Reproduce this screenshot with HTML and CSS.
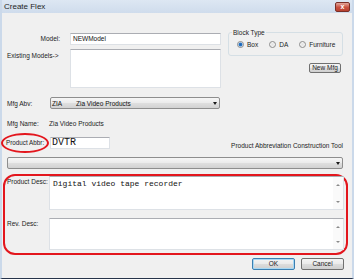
FILE: index.html
```html
<!DOCTYPE html>
<html lang="en">
<head>
  <meta charset="UTF-8">
  <title>Create Flex</title>
  <link rel="stylesheet" href="styles.css">
</head>
<body>
  <div class="window">
    <div class="titlebar">
      <span class="title">Create Flex</span>
      <span class="close-btn">x</span>
    </div>

    <div class="content">
      <!-- model name + block type -->
      <div class="top">
        <div class="models">
          <span class="lbl lbl-model">Model:</span>
          <div class="field model-field">NEWModel</div>
          <span class="lbl lbl-existing">Existing Models-&gt;</span>
          <div class="field list-field"></div>
        </div>
        <div class="side">
          <fieldset class="group">
            <legend>Block Type</legend>
            <div class="radios">
              <span class="radio"><span class="dot checked"></span>Box</span>
              <span class="radio"><span class="dot"></span>DA</span>
              <span class="radio"><span class="dot"></span>Furniture</span>
            </div>
          </fieldset>
          <div class="btn new-mfg">New Mfg</div>
        </div>
      </div>

      <div class="line mfg-row">
        <span class="lbl col-43">Mfg Abv:</span>
        <div class="combo mfg-combo"><span class="abv">ZIA</span>Zia Video Products<span class="arrow"></span></div>
      </div>

      <div class="line name-row">
        <span class="lbl col-42">Mfg Name:</span>
        <span class="lbl">Zia Video Products</span>
      </div>

      <div class="line abbr-row">
        <span class="lbl circled">Product Abbr:</span>
        <div class="field abbr-field">DVTR</div>
        <span class="lbl tool-lbl">Product Abbreviation Construction Tool</span>
      </div>

      <div class="combo wide-combo"><span class="arrow"></span></div>

      <!-- description boxes, marked in red -->
      <div class="highlight">
        <div class="desc-row">
          <span class="lbl col-42 desc-lbl">Product Desc:</span>
          <div class="memo memo-desc">
            <div class="memo-text">Digital video tape recorder</div>
            <div class="scroll"><span class="up"></span><span class="down"></span></div>
          </div>
        </div>
        <div class="desc-row rev-row">
          <span class="lbl col-42 desc-lbl">Rev. Desc:</span>
          <div class="memo memo-rev">
            <div class="memo-text"></div>
            <div class="scroll"><span class="up"></span><span class="down"></span></div>
          </div>
        </div>
      </div>

      <div class="buttons">
        <div class="btn ok-btn">OK</div>
        <div class="btn cancel-btn">Cancel</div>
      </div>
    </div>
  </div>
</body>
</html>
```

FILE: styles.css
```css
body {
  margin: 0;
  background-color: #f0f0f0;
  font-family: "Liberation Sans", Arial, sans-serif;
}

.window {
  width: 354px;
  height: 279px;
  box-sizing: border-box;
  background-color: #f0f0f0;
  border-left: 2px solid #cbd9ea;
  border-right: 2px solid #cbd9ea;
  border-bottom: 1px solid #26334a;
  display: flex;
  flex-direction: column;
}

.titlebar {
  height: 13px;
  display: flex;
  align-items: center;
  background: linear-gradient(#dde7f3, #cfdcec);
}
.title {
  padding-left: 2px;
  font-size: 8px;
  color: #1e1e1e;
}
.close-btn {
  margin-left: auto;
  margin-right: 2px;
  width: 15px;
  height: 10px;
  box-sizing: border-box;
  border: 1px solid #7a2f27;
  border-radius: 2px;
  background: linear-gradient(#e3a79c, #c9503f 55%, #b8412f);
  color: #fff;
  font-size: 7px;
  font-weight: bold;
  line-height: 7px;
  text-align: center;
}

.content {
  flex: 1;
  padding: 0 8px 0 5px;
}

.lbl {
  font-size: 6.5px;
  line-height: 7px;
  color: #1c1c1c;
  white-space: nowrap;
}

.field {
  box-sizing: border-box;
  background-color: #fff;
  border: 1px solid #dde1e6;
  border-top-color: #abadb3;
  font-size: 6.5px;
  line-height: 10px;
  color: #111;
}

/* top block */
.top {
  display: flex;
  align-items: flex-start;
  margin-top: 16px;
}
.models {
  width: 214px;
  padding-top: 4px;
  display: grid;
  grid-template-columns: 63px 151px;
  row-gap: 4px;
}
.lbl-model {
  text-align: right;
  padding-right: 10px;
  line-height: 12px;
}
.lbl-existing {
  padding-top: 3px;
}
.model-field {
  height: 12px;
  padding: 0 2px;
}
.list-field {
  height: 39px;
}

.side {
  width: 115px;
  margin-left: 7px;
  display: flex;
  flex-direction: column;
}
.group {
  margin: 0;
  min-width: 0;
  padding: 4px 0 7px 8px;
  border: 1px solid #d5dfe5;
  border-radius: 3px;
}
.group legend {
  padding: 0 1px;
  margin-left: -5px;
  font-size: 6.5px;
  line-height: 7px;
  color: #1c1c1c;
}
.radios {
  display: flex;
  align-items: center;
  height: 8px;
}
.radio {
  display: flex;
  align-items: center;
  margin-right: 11px;
  font-size: 6.5px;
  color: #1c1c1c;
}
.dot {
  width: 7px;
  height: 7px;
  box-sizing: border-box;
  border: 1px solid #8d8d8d;
  border-radius: 50%;
  margin-right: 3px;
  background: radial-gradient(circle, #e2e2e2 0, #f7f7f7 3px);
}
.dot.checked {
  background: radial-gradient(circle, #1f63b0 0, #2c78c8 1.6px, #dfe8f2 2.3px);
}

.btn {
  box-sizing: border-box;
  border: 1px solid #707070;
  border-radius: 2px;
  background: linear-gradient(#f4f4f4, #ebebeb 45%, #dddddd 50%, #cfcfcf);
  text-align: center;
  font-size: 6.5px;
  color: #1c1c1c;
}
.new-mfg {
  align-self: flex-end;
  margin-top: 7px;
  margin-right: 2px;
  width: 32px;
  height: 10px;
  line-height: 8px;
}

/* manufacturer rows */
.line {
  display: flex;
  align-items: center;
  height: 12px;
}
.col-43 {
  width: 43px;
}
.col-42 {
  width: 42px;
}
.mfg-row {
  margin-top: 9px;
}
.combo {
  box-sizing: border-box;
  height: 12px;
  display: flex;
  align-items: center;
  border: 1px solid #8e8e8e;
  border-radius: 2px;
  background: linear-gradient(#f6f6f6, #ececec 45%, #dedede 55%, #d2d2d2);
  font-size: 6.5px;
  color: #111;
  padding-left: 1px;
}
.mfg-combo {
  width: 170px;
}
.abv {
  width: 24px;
}
.arrow {
  margin-left: auto;
  margin-right: 2px;
  width: 0;
  height: 0;
  border-left: 2.5px solid transparent;
  border-right: 2.5px solid transparent;
  border-top: 3px solid #1a1a1a;
}
.name-row {
  margin-top: 8px;
}
.abbr-row {
  margin-top: 8px;
}
.circled {
  box-sizing: border-box;
  width: 48px;
  height: 20px;
  margin: -4px 1px -4px -6px;
  padding-left: 3px;
  border: 2px solid #e3161d;
  border-radius: 50%;
  line-height: 16px;
  font-size: 6.3px;
}
.abbr-field {
  width: 60px;
  height: 12px;
  padding: 0 1px;
  font-family: "Liberation Mono", "Courier New", monospace;
  font-size: 10px;
}
.tool-lbl {
  margin-left: auto;
  margin-right: 1px;
  align-self: flex-end;
}
.wide-combo {
  margin-top: 8px;
  width: 336px;
}

/* red box around the descriptions */
.highlight {
  margin: 5px -4px 0 -4px;
  padding: 0 2px 3px 2px;
  border: 2px solid #e3161d;
  border-radius: 12px;
}
.desc-row {
  display: flex;
  align-items: flex-start;
}
.rev-row {
  margin-top: 8px;
}
.desc-lbl {
  padding-top: 2px;
}
.memo {
  flex: 1;
  display: flex;
  box-sizing: border-box;
  background-color: #fff;
  border: 1px solid #dde1e6;
  border-top-color: #abadb3;
}
.memo-desc {
  height: 34px;
}
.memo-rev {
  height: 32px;
}
.memo-text {
  flex: 1;
  padding: 2px 3px;
  font-family: "Liberation Mono", "Courier New", monospace;
  font-size: 8px;
  line-height: 10px;
  color: #111;
}
.scroll {
  width: 10px;
  display: flex;
  flex-direction: column;
  justify-content: space-between;
  align-items: center;
  padding: 7px 0 6px;
  background-color: #fafafa;
}
.up, .down {
  width: 0;
  height: 0;
  border-left: 2px solid transparent;
  border-right: 2px solid transparent;
}
.up {
  border-bottom: 2px solid #8a8a8a;
}
.down {
  border-top: 2px solid #8a8a8a;
}

.buttons {
  margin-top: 3px;
  display: flex;
  justify-content: flex-end;
  gap: 6px;
}
.ok-btn, .cancel-btn {
  width: 43px;
  height: 12px;
  line-height: 10px;
}
.ok-btn {
  border-color: #3c7fb1;
  box-shadow: inset 0 0 0 1px #a8d8f4;
}
```
